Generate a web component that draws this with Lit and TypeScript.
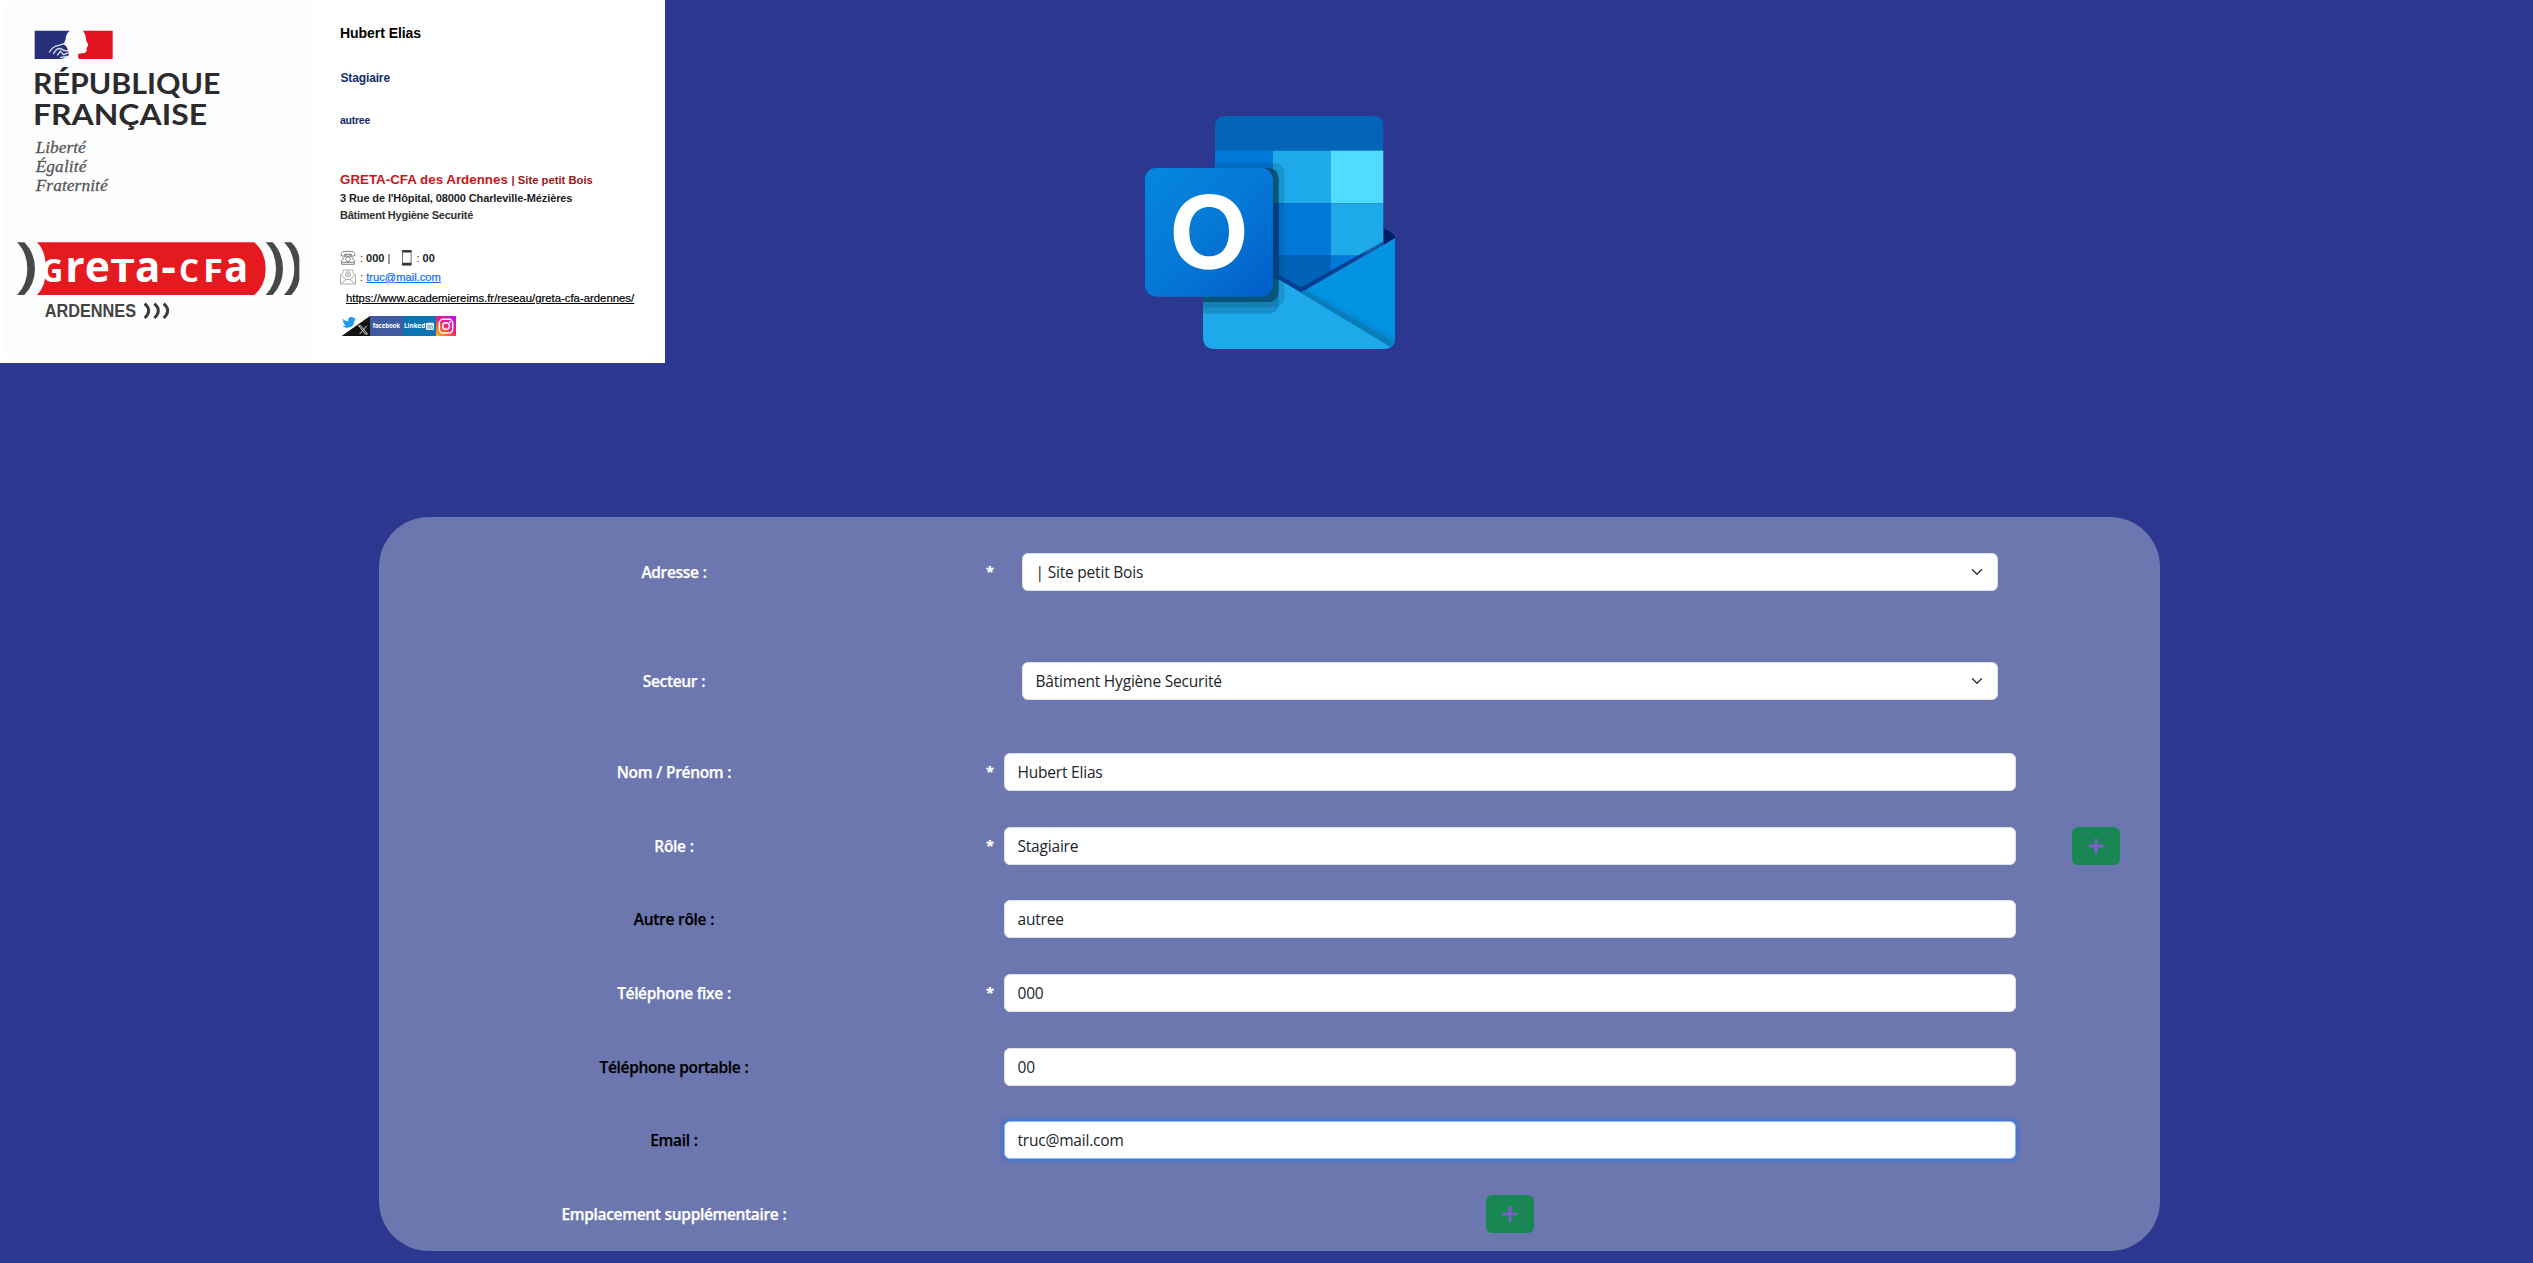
import { LitElement, html, css, nothing } from "lit";
import { customElement, property } from "lit/decorators.js";

const plus = html`<svg class="plus" viewBox="0 0 16 16" width="16" height="16"><path d="M8 1.6V14.4M1.6 8H14.4" stroke="#7a5fc7" stroke-width="2.9" stroke-linecap="round" fill="none"/></svg>`;

@customElement("institution-logos")
class InstitutionLogos extends LitElement {
  static styles = css`
    :host { display: block; width: 330px; height: 363px; }
    svg { display: block; }
    .marque { font-family: Lato, "Open Sans", sans-serif; font-weight: 700; fill: #2b2b2d; }
    .devise { font-family: "Liberation Serif", serif; font-style: italic; fill: #555; stroke: #555; stroke-width: .8; }
    .greta { font-family: "Open Sans", sans-serif; font-weight: 700; fill: #fff; }
    .city { font-family: "Liberation Sans", sans-serif; font-weight: 700; fill: #444; }
  `;
  render() {
    return html`<svg viewBox="0 0 990 1089" width="330" height="363">
      <rect x="12" y="8" width="930" height="1062" fill="#fdfdfd"/>
      <path d="M104 92H209Q196 104 197 118L191 132L200 141Q206 152 207 165L186 177H104Z" fill="#26307a"/>
      <path d="M148 157Q158 138 176 136L199 129M160 162Q170 143 182 146Q196 156 207 151M172 166L181 154L191 164L207 158M180 173L199 169" fill="none" stroke="#d9dbe8" stroke-width="4"/>
      <path d="M249 92H338V177H237Q232 172 235 161Q246 160 255 159L261 151L259 146L265 134L258 121Q259 107 249 92Z" fill="#e1131f"/>
      <g class="marque" font-size="85">
        <text x="99" y="282" textLength="562" lengthAdjust="spacingAndGlyphs">RÉPUBLIQUE</text>
        <text x="99" y="374" textLength="522" lengthAdjust="spacingAndGlyphs">FRANÇAISE</text>
      </g>
      <g class="devise" font-size="52">
        <text x="107" y="458" textLength="150">Liberté</text>
        <text x="107" y="516" textLength="152">Égalité</text>
        <text x="107" y="574" textLength="216">Fraternité</text>
      </g>
      <path d="M111 727H763Q797 757 797 806T763 885H111Q138 858 138 806T111 727Z" fill="#e41a20"/>
      <g fill="#48484a">
        <path d="M51 727H73Q105 760 105 806T73 885H51Q82 853 82 806T51 727Z"/>
        <path d="M797 727H818Q849 760 849 806T818 885H797Q828 853 828 806T797 727Z"/>
        <path d="M852 727H874Q896 750 898 775V838Q896 862 874 885H852Q883 853 883 806T852 727Z"/>
      </g>
      <g class="greta">
        <text x="124" y="845" font-size="98" textLength="66" lengthAdjust="spacingAndGlyphs">G</text>
        <text x="196" y="845" font-size="130" textLength="134" lengthAdjust="spacingAndGlyphs">re</text>
        <text x="331" y="845" font-size="94" textLength="74" lengthAdjust="spacingAndGlyphs">T</text>
        <text x="405" y="845" font-size="130" textLength="76" lengthAdjust="spacingAndGlyphs">a</text>
        <text x="484" y="845" font-size="130" textLength="44" lengthAdjust="spacingAndGlyphs">-</text>
        <text x="537" y="845" font-size="98" textLength="60" lengthAdjust="spacingAndGlyphs">C</text>
        <text x="609" y="845" font-size="94" textLength="60" lengthAdjust="spacingAndGlyphs">F</text>
        <text x="673" y="845" font-size="130" textLength="72" lengthAdjust="spacingAndGlyphs">a</text>
      </g>
      <text class="city" x="134" y="951" font-size="57" textLength="274" lengthAdjust="spacingAndGlyphs">ARDENNES</text>
      <g fill="none" stroke="#3c3c3c" stroke-width="9">
        <path d="M434 911Q458 932 434 954M463 911Q487 932 463 954M491 911Q515 932 491 954"/>
      </g>
    </svg>`;
  }
}

@customElement("signature-card")
class SignatureCard extends LitElement {
  static styles = css`
    :host { display: flex; width: 665px; height: 363px; background: #fff; font-family: "Liberation Sans", Arial, sans-serif; color: #1c1c1e; }
    .body { display: flex; flex-direction: column; align-items: flex-start; padding-left: 10px; white-space: nowrap; }
    .line { line-height: 18px; font-size: 11px; font-weight: 700; letter-spacing: -.11px; }
    .name { margin-top: 24px; font-size: 14px; color: #000; letter-spacing: -.05px; }
    .role { margin: 27px 0 0 .5px; font-size: 12px; color: #0f2c6b; letter-spacing: -.14px; }
    .other { margin-top: 24px; font-size: 10.5px; color: #0f2c6b; letter-spacing: -.25px; }
    .org { margin-top: 42px; font-size: 13.35px; color: #c8171c; letter-spacing: 0; }
    .site { font-size: 11.25px; color: #9c1519; }
    .addr { margin-top: 0; }
    .sector { margin-top: -1px; letter-spacing: -.25px; color: #333; }
    .contact { display: flex; align-items: center; height: 19px; letter-spacing: 0; }
    .phones { margin-top: 24px; }
    .contact svg { margin-right: 4px; }
    .contact .mobile { margin-left: 12px; }
    .sep { font-weight: 400; }
    .mail { color: #1a6ff0; text-decoration: underline; font-weight: 400; font-size: 11.2px; -webkit-text-stroke: .25px #1a6ff0; }
    .url { margin: 3px 0 0 6px; font-weight: 400; font-size: 11.35px; letter-spacing: 0; text-decoration: underline; color: #000; -webkit-text-stroke: .2px #000; }
    .social { display: block; margin: 9px 0 0 1px; }
    .brand { font-family: "Open Sans", sans-serif; font-weight: 700; fill: #fff; }
  `;
  render() {
    return html`<institution-logos></institution-logos>
      <div class="body">
        <div class="line name">Hubert Elias</div>
        <div class="line role">Stagiaire</div>
        <div class="line other">autree</div>
        <div class="line org">GRETA-CFA des Ardennes <span class="site">| Site petit Bois</span></div>
        <div class="line addr">3 Rue de l'Hôpital, 08000 Charleville-Mézières</div>
        <div class="line sector">Bâtiment Hygiène Securité</div>
        <div class="line contact phones">
          <svg viewBox="0 0 16 16" width="16" height="16" fill="none" stroke="#777" stroke-width=".9"><path d="M1.3 6V3.5Q2 1.5 5 1.4H11Q14 1.5 14.7 3.5V6H11.3V4.2H4.7V6ZM4.8 6.2L1.6 11V14.3H14.4V11L11.2 6.2Z"/><circle cx="8" cy="9.3" r="2.4"/><path d="M2 12.4H14M6 4V6M10 4V6"/></svg>
          <span><span class="sep">:</span> 000 <span class="sep">|</span></span>
          <svg class="mobile" viewBox="0 0 10 16" width="10" height="16"><rect x=".5" y=".5" width="8.6" height="14.6" fill="#fff" stroke="#777"/><path d="M.2.3H9.4V2.5H.2ZM.2 12.8H9.4V15.2H.2Z" fill="#333"/></svg>
          <span><span class="sep">:</span> 00</span>
        </div>
        <div class="line contact">
          <svg viewBox="0 0 16 16" width="16" height="16" fill="none" stroke="#999" stroke-width=".8"><path d="M.6 6L3 4V1H13V4L15.4 6V15H.6ZM.6 6L6 10.5H10L15.4 6M.6 15L6 10.5M10 10.5L15.4 15"/><circle cx="8" cy="5.3" r="2.6"/><circle cx="8" cy="5.3" r="1"/></svg>
          <span><span class="sep">:</span>&nbsp;<span class="mail">truc@mail.com</span></span>
        </div>
        <div class="line url">https://www.academiereims.fr/reseau/greta-cfa-ardennes/</div>
        <svg class="social" viewBox="0 0 345 60" width="115" height="20">
          <defs>
            <linearGradient id="ig" x1="0" y1="1" x2=".8" y2="0"><stop offset="0" stop-color="#ffc32a"/><stop offset=".3" stop-color="#fb6a1d"/><stop offset=".6" stop-color="#f0188c"/><stop offset="1" stop-color="#b818e0"/></linearGradient>
          </defs>
          <path d="M2 60L87 0V60Z" fill="#111"/>
          <path d="M5 8Q13 16 22 16Q20 3 31 3Q36 3 39 7L44 5L41 10L44 11L40 15Q39 34 20 35Q11 36 4 31Q11 31 14 28Q8 26 8 22H11Q5 18 5 14L8 15Q4 11 5 8Z" fill="#1d9bf0"/>
          <path d="M53 29L73 54H79L59 29ZM77 29L56 54" fill="none" stroke="#ddd" stroke-width="3"/>
          <rect x="87" width="99" height="60" fill="#405a9f"/>
          <rect x="186" width="99" height="60" fill="#0b74b1"/>
          <text class="brand" x="95" y="37" font-size="19" textLength="82" lengthAdjust="spacingAndGlyphs">facebook</text>
          <text class="brand" x="189" y="37" font-size="20" textLength="64" lengthAdjust="spacingAndGlyphs">Linked</text>
          <rect x="255" y="20" width="24" height="22" rx="3" fill="#e8f3fa"/>
          <text x="258" y="38" font-size="19" font-weight="700" fill="#4d9bc8" textLength="18" lengthAdjust="spacingAndGlyphs">in</text>
          <rect x="285" width="60" height="60" fill="url(#ig)"/>
          <g fill="none" stroke="#fff" stroke-width="4.5"><rect x="295" y="10" width="40" height="41" rx="11"/><circle cx="315" cy="30" r="10"/></g>
          <circle cx="327" cy="18" r="2.8" fill="#fff"/>
        </svg>
      </div>`;
  }
}

@customElement("outlook-logo")
class OutlookLogo extends LitElement {
  static styles = css`:host { display: block; width: 280px; height: 260px; } svg { display: block; }`;
  render() {
    return html`<svg viewBox="0 0 840 780" width="280" height="260">
      <defs>
        <linearGradient id="tile" x1="0" y1="0" x2="1" y2="1"><stop offset="0" stop-color="#0587dc"/><stop offset=".5" stop-color="#0578d6"/><stop offset="1" stop-color="#025dcb"/></linearGradient>
        <clipPath id="sheet"><path d="M287 48H729Q761 48 761 80V428L513 578L255 430V80Q255 48 287 48Z"/></clipPath>
        <clipPath id="env"><path d="M219 402L513 578L795 415V712Q795 747 761 747H254Q219 747 219 712Z"/></clipPath>
        <clipPath id="all"><path d="M255 80Q255 48 287 48H729Q761 48 761 80V428L795 415V712Q795 747 761 747H254Q219 747 219 712V402H255Z"/></clipPath>
      </defs>
      <path d="M761 385L786 400Q796 407 796 417Q795 423 761 442Z" fill="#001c66"/>
      <g clip-path="url(#sheet)">
        <rect x="255" y="48" width="506" height="105" fill="#0364b8"/>
        <rect x="255" y="152" width="174" height="158" fill="#0078d7"/>
        <rect x="429" y="152" width="174" height="158" fill="#1ea9ea"/>
        <rect x="603" y="152" width="158" height="158" fill="#50dcff"/>
        <rect x="255" y="310" width="348" height="157" fill="#0078d7"/>
        <rect x="603" y="310" width="158" height="157" fill="#1ea9ea"/>
        <rect x="255" y="467" width="348" height="120" fill="#0262b8"/>
        <rect x="603" y="467" width="158" height="120" fill="#0078d7"/>
        <path d="M400 500L513 562L761 424V450L513 590L400 520Z" fill="#013f91"/>
        <path d="M715 449L761 424V440L690 480Z" fill="#0f73b5"/>
      </g>
      <g clip-path="url(#env)">
        <rect x="219" y="400" width="576" height="350" fill="#1ea9ea"/>
        <path d="M513 578L795 415V740L782 740Z" fill="#0393e3"/>
        <path d="M513 578L535 567L795 712V747H790Z" fill="#048bd7"/>
        <path d="M513 578L527 572L788 724L780 739Z" fill="#0a7db8"/>
      </g>
      <g clip-path="url(#all)">
        <path d="M219 188H429Q463 188 463 222V588Q463 622 429 622H219Z" fill="#064b70" opacity=".22"/>
        <path d="M219 204H412Q446 204 446 238V608Q446 641 412 641H219Z" fill="#064b70" opacity=".28"/>
        <path d="M300 204H412Q446 204 446 238V572Q446 606 412 606H219V500Z" fill="#023248" opacity=".55"/>
      </g>
      <path d="M429 310H446V543L429 531Z" fill="#003f80"/>
      <rect x="45" y="204" width="384" height="386" rx="34" fill="url(#tile)"/>
      <path fill-rule="evenodd" fill="#fff" d="M238 282C302 282 343 325 343 393C343 463 301 509 236 509C172 509 131 464 131 397C131 327 173 282 238 282ZM237 321C201 321 178 350 178 396C178 441 201 469 237 469C275 469 297 441 297 395C297 348 275 321 237 321Z"/>
    </svg>`;
  }
}

@customElement("field-row")
class FieldRow extends LitElement {
  @property() label = "";
  @property() value = "";
  @property() kind = "input";
  @property({ type: Boolean }) required = false;
  @property({ type: Boolean }) dark = false;
  @property({ type: Boolean }) focused = false;
  @property({ type: Boolean }) addable = false;
  static styles = css`
    :host { display: grid; grid-template-columns: 590px 35px 1012px 144px; height: 38px; align-items: center; }
    .label, .star { font-weight: 600; color: #fff; text-align: center; letter-spacing: -.34px; -webkit-text-stroke: .25px currentColor; }
    .label { word-spacing: .4px; }
    .label.dark { color: #000; }
    .star { text-align: right; padding-right: 10.5px; font-weight: 700; font-size: 14.5px; }
    .control { box-sizing: border-box; height: 38px; border: 1px solid #dee2e6; border-radius: 6px; background: #fff; color: #212529; padding: 0 12px 0 12.5px; display: flex; align-items: center; justify-content: space-between; letter-spacing: -.2px; }
    .select { margin: 0 18px; }
    .focused { border-color: #86b7fe; box-shadow: 0 0 0 4px rgba(13, 110, 253, .25); }
    .add { display: flex; align-items: center; justify-content: center; width: 48px; height: 38px; border: 0; border-radius: 6px; background: #198754; padding: 0; justify-self: center; margin: 0 auto; }
    .trail { padding-left: 16px; }
  `;
  private control() {
    if (this.kind === "button") return html`<button class="add" aria-label="Ajouter">${plus}</button>`;
    if (this.kind === "select")
      return html`<div class="control select"><span>${this.value}</span><svg width="16" height="12" viewBox="0 0 16 16"><path d="m2 5 6 6 6-6" fill="none" stroke="#343a40" stroke-width="2" stroke-linecap="round" stroke-linejoin="round"/></svg></div>`;
    return html`<div class="control ${this.focused ? "focused" : ""}">${this.value}</div>`;
  }
  render() {
    return html`<div class="label ${this.dark ? "dark" : ""}">${this.label} :</div>
      <div class="star">${this.required ? "*" : nothing}</div>
      ${this.control()}
      ${this.addable ? html`<div class="trail"><button class="add" aria-label="Ajouter">${plus}</button></div>` : html`<div></div>`}`;
  }
}

@customElement("app-root")
class AppRoot extends LitElement {
  static styles = css`
    :host { display: flex; flex-direction: column; box-sizing: border-box; width: 2533px; height: 1263px; overflow: hidden; background: #2c388f; font: 15.5px/24px "Open Sans", "Noto Sans", sans-serif; }
    .top { display: flex; height: 517px; align-items: flex-start; }
    .logo { margin: 100px 0 0 465px; }
    .panel { display: flex; flex-direction: column; box-sizing: border-box; width: 1781px; height: 734px; margin-left: 379px; padding-top: 36px; border-radius: 50px; background: #6d77af; }
    .sector { margin-top: 71px; }
    .fields { display: flex; flex-direction: column; gap: 35.67px; margin-top: 53px; }
  `;
  render() {
    return html`
      <div class="top"><signature-card></signature-card><outlook-logo class="logo"></outlook-logo></div>
      <div class="panel">
        <field-row kind="select" label="Adresse" value="| Site petit Bois" required></field-row>
        <field-row class="sector" kind="select" label="Secteur" value="Bâtiment Hygiène Securité"></field-row>
        <div class="fields">
          <field-row label="Nom / Prénom" value="Hubert Elias" required></field-row>
          <field-row label="Rôle" value="Stagiaire" required addable></field-row>
          <field-row label="Autre rôle" value="autree" dark></field-row>
          <field-row label="Téléphone fixe" value="000" required></field-row>
          <field-row label="Téléphone portable" value="00" dark></field-row>
          <field-row label="Email" value="truc@mail.com" dark focused></field-row>
          <field-row kind="button" label="Emplacement supplémentaire"></field-row>
        </div>
      </div>`;
  }
}
